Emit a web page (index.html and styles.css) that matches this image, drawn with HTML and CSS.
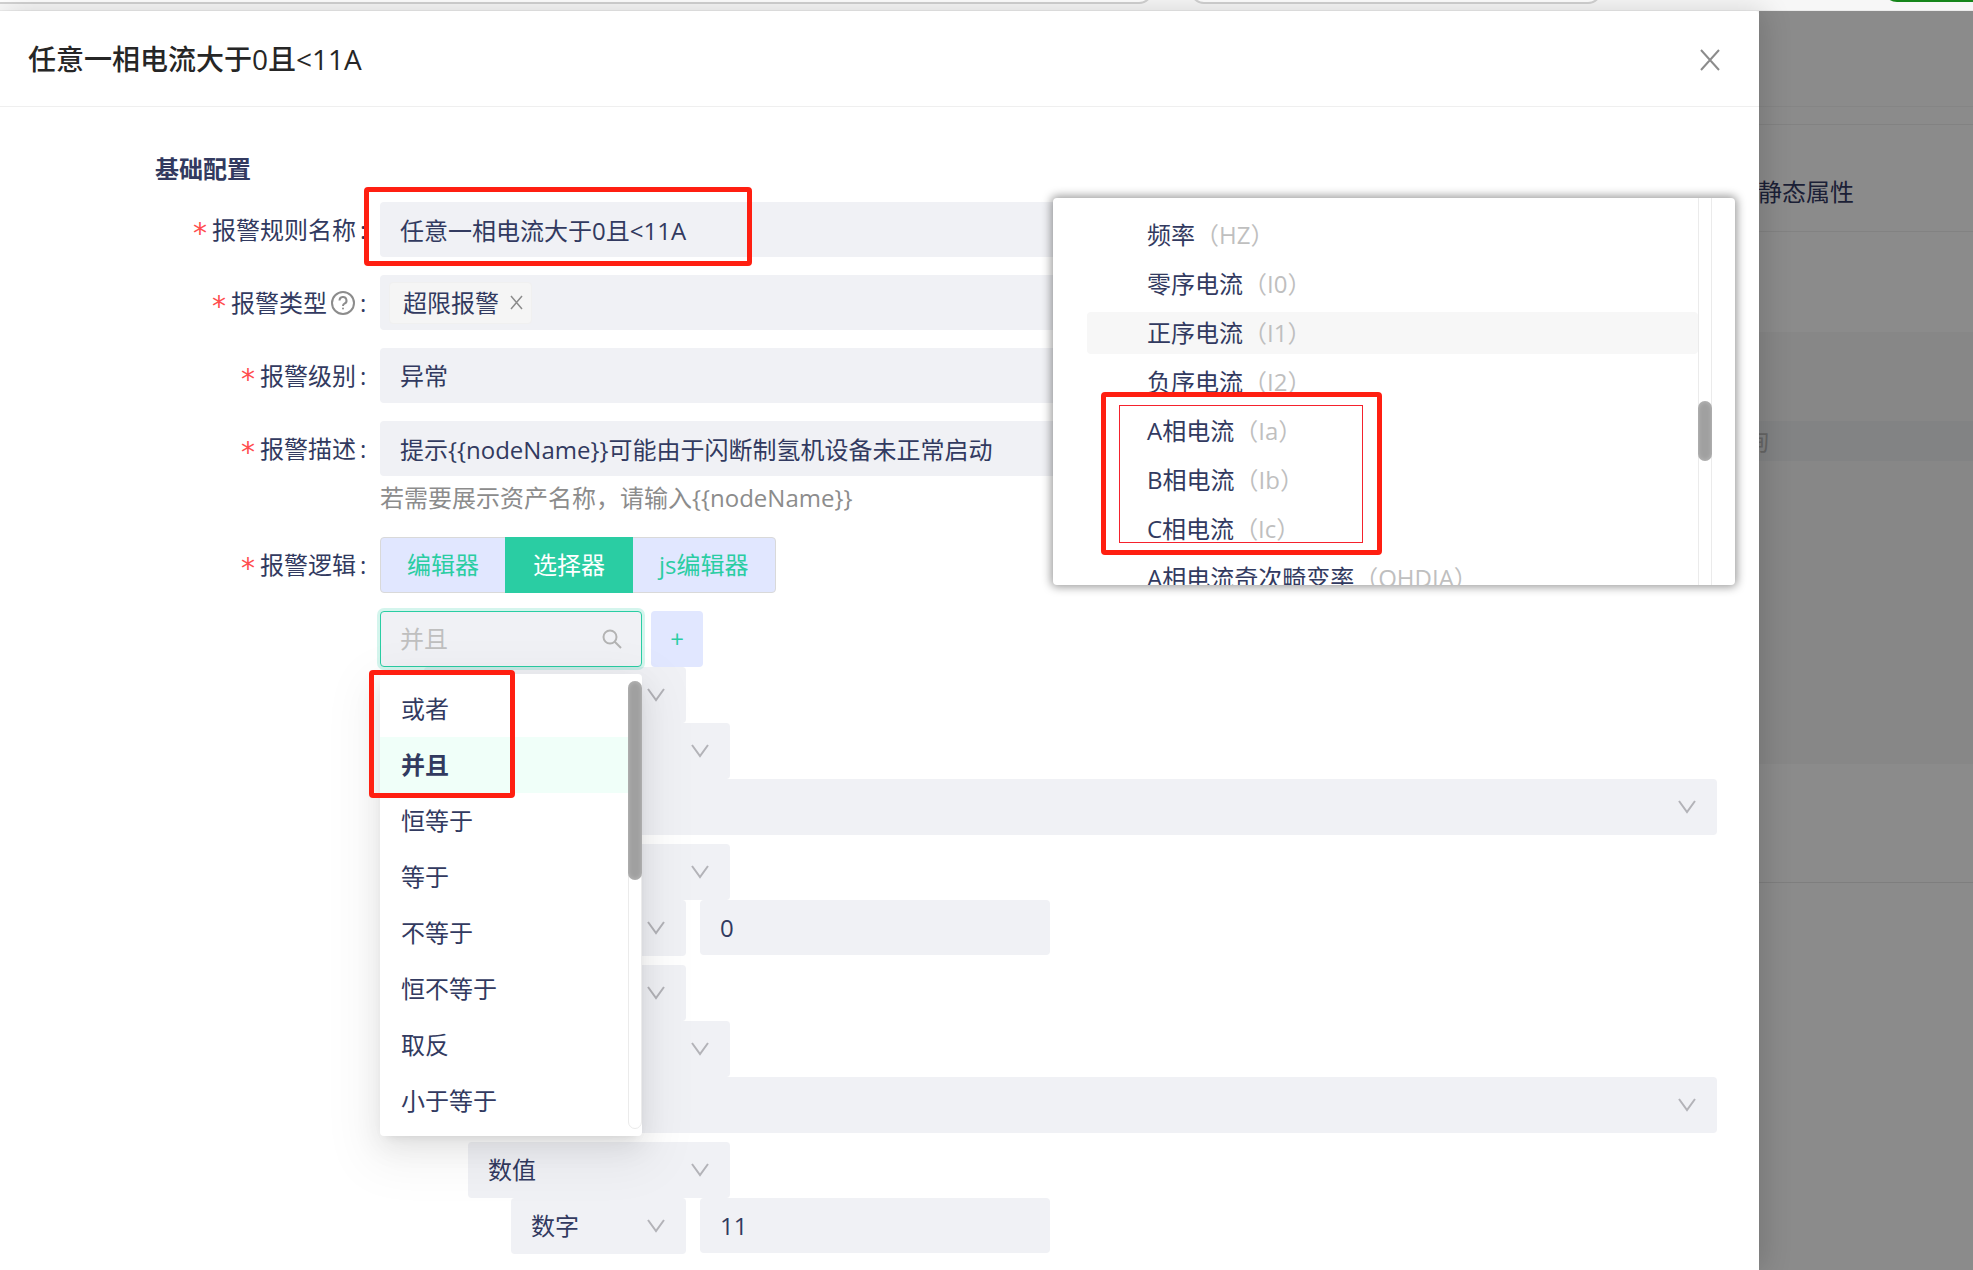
FILE: index.html
```html
<!DOCTYPE html>
<html lang="zh-CN">
<head>
  <meta charset="UTF-8" />
  <meta name="viewport" content="width=device-width, initial-scale=1" />
  <title>任意一相电流大于0且&lt;11A</title>
  <link rel="stylesheet" href="styles.css">
</head>
<body>
  <div class="topbar">
    <div class="address"></div>
    <div class="search-pill"></div>
    <div class="update-pill"></div>
  </div>

  <div class="page">
    <!-- rule drawer -->
    <main class="drawer">
      <header class="drawer-header">
        <h1>任意一相电流大于0且&lt;11A</h1>
        <button type="button" class="close" aria-label="关闭">
          <svg width="20" height="22" viewBox="0 0 20 22"><path d="M1 1L19 21M19 1L1 21" /></svg>
        </button>
      </header>

      <form class="drawer-body">
        <h2>基础配置</h2>

        <div class="row">
          <label class="label" for="name"><span class="star">*</span>报警规则名称<span class="colon">:</span></label>
          <div class="control">
            <input class="field" type="text" id="name" value="任意一相电流大于0且&lt;11A">
            <div class="mark mark-name"></div>
          </div>
        </div>

        <div class="row">
          <div class="label"><span class="star">*</span>报警类型
            <svg class="help-icon" width="26" height="26" viewBox="0 0 26 26"><circle cx="13" cy="13" r="11" /><path d="M9.500 10.500a3.500 3.500 0 1 1 5 3.200c-1 .5-1.500 1-1.500 2.300" /><circle class="dot" cx="13" cy="18.500" r="1" /></svg>
            <span class="colon">:</span></div>
          <div class="control">
            <div class="field tags">
              <span class="tag">超限报警
                <button type="button" class="tag-close" aria-label="移除">
                  <svg width="13" height="15" viewBox="0 0 13 15"><path d="M1 1L12 14M12 1L1 14" /></svg>
                </button>
              </span>
            </div>
          </div>
        </div>

        <div class="row">
          <label class="label" for="level"><span class="star">*</span>报警级别<span class="colon">:</span></label>
          <div class="control">
            <select class="field" id="level"><option>异常</option></select>
          </div>
        </div>

        <div class="row">
          <label class="label" for="desc"><span class="star">*</span>报警描述<span class="colon">:</span></label>
          <div class="control">
            <input class="field" type="text" id="desc" value="提示{{nodeName}}可能由于闪断制氢机设备未正常启动">
            <p class="hint">若需要展示资产名称，请输入{{nodeName}}</p>
          </div>
        </div>

        <div class="row">
          <div class="label"><span class="star">*</span>报警逻辑<span class="colon">:</span></div>
          <div class="control">
            <div class="segments">
              <input type="radio" name="mode" id="mode-editor"><label for="mode-editor">编辑器</label>
              <input type="radio" name="mode" id="mode-picker" checked><label for="mode-picker">选择器</label>
              <input type="radio" name="mode" id="mode-js"><label for="mode-js">js编辑器</label>
            </div>

            <div class="operator">
              <div class="search">
                <input type="text" placeholder="并且" aria-label="运算符">
                <svg width="20" height="20" viewBox="0 0 20 20"><circle cx="8" cy="8" r="6.500" /><path d="M12.500 12.500L19 19" /></svg>
              </div>
              <button type="button" class="add">+</button>

              <div class="menu">
                <ul>
                  <li>或者</li>
                  <li class="selected">并且</li>
                  <li>恒等于</li>
                  <li>等于</li>
                  <li>不等于</li>
                  <li>恒不等于</li>
                  <li>取反</li>
                  <li>小于等于</li>
                </ul>
                <div class="track"><div class="thumb"></div></div>
              </div>
              <div class="mark mark-menu"></div>
            </div>

            <div class="tree">
              <div class="node level-1"><select class="pick" aria-label="比较"><option></option></select></div>
              <div class="node level-2"><select class="pick" aria-label="类型"><option></option></select></div>
              <div class="node level-3"><select class="pick wide" aria-label="属性"><option></option></select></div>
              <div class="node level-2 spaced"><select class="pick" aria-label="类型"><option>数值</option></select></div>
              <div class="node level-3">
                <select class="pick small" aria-label="格式"><option>数字</option></select>
                <input class="value" type="text" value="0" aria-label="值">
              </div>
              <div class="node level-1 spaced"><select class="pick" aria-label="比较"><option></option></select></div>
              <div class="node level-2"><select class="pick" aria-label="类型"><option></option></select></div>
              <div class="node level-3"><select class="pick wide" aria-label="属性"><option></option></select></div>
              <div class="node level-2 spaced"><select class="pick" aria-label="类型"><option>数值</option></select></div>
              <div class="node level-3">
                <select class="pick small" aria-label="格式"><option>数字</option></select>
                <input class="value" type="text" value="11" aria-label="值">
              </div>
            </div>
          </div>
        </div>
      </form>

      <!-- attribute list -->
      <aside class="popup">
        <ul>
          <li>频率<span>（HZ）</span></li>
          <li>零序电流<span>（I0）</span></li>
          <li class="hover">正序电流<span>（I1）</span></li>
          <li>负序电流<span>（I2）</span></li>
          <li>A相电流<span>（Ia）</span></li>
          <li>B相电流<span>（Ib）</span></li>
          <li>C相电流<span>（Ic）</span></li>
          <li>A相电流奇次畸变率<span>（OHDIA）</span></li>
        </ul>
        <div class="popup-track"><div class="popup-thumb"></div></div>
        <div class="mark mark-phase"></div>
        <div class="mark-thin"></div>
      </aside>
    </main>

    <!-- page under the mask -->
    <section class="behind">
      <div class="behind-bar"></div>
      <div class="behind-gap"></div>
      <div class="behind-tab">静态属性</div>
      <div class="behind-tools"></div>
      <div class="behind-card">
        <div class="behind-head">询</div>
      </div>
      <div class="behind-foot"></div>
    </section>
  </div>
</body>
</html>
```
FILE: styles.css
```css
* {
  box-sizing: border-box;
}
body {
  margin: 0;
  min-height: 100vh;
  display: flex;
  flex-direction: column;
  font-family: "Open Sans", "Noto Sans CJK SC", sans-serif;
  font-size: 24px;
  line-height: 36px;
  color: #323a60;
  background: #fff;
}
h1, h2, p, ul {
  margin: 0;
  padding: 0;
}
ul {
  list-style: none;
}
input, select, button {
  font: inherit;
  color: inherit;
  border: none;
  outline: none;
  margin: 0;
}
svg {
  fill: none;
  stroke: #8c8c8c;
  stroke-width: 2;
}

/* browser bar */
.topbar {
  display: flex;
  gap: 37px;
  height: 11px;
  overflow: hidden;
  background: #f7f7f7;
  border-bottom: 1px solid #ebebeb;
}
.address, .search-pill {
  height: 40px;
  margin-top: -36px;
  background: #fff;
  border: 2px solid #d2d2d2;
  border-radius: 14px;
}
.address {
  flex: 1;
  margin-left: -20px;
}
.search-pill {
  width: 412px;
  margin-right: 244px;
}
.update-pill {
  width: 90px;
  height: 40px;
  margin-top: -38px;
  background: #15851a;
  border-radius: 14px 0 0 14px;
}

.page {
  flex: 1;
  display: flex;
}

/* drawer */
.drawer {
  flex: 1;
  position: relative;
  z-index: 1;
  background: #fff;
  border-top-right-radius: 4px;
  box-shadow: 6px 0 28px rgba(0,0,0,0.15);
}
.drawer-header {
  display: flex;
  align-items: center;
  justify-content: space-between;
  height: 96px;
  padding: 0 39px 0 28px;
  border-bottom: 1px solid #efefef;
}
.drawer-header h1 {
  font-size: 28px;
  font-weight: 500;
  color: #262626;
}
.close {
  display: flex;
  padding: 2px 0 0;
  background: none;
}
.drawer-body {
  display: flex;
  flex-direction: column;
  gap: 18px;
  padding: 44px 42px 16px 0;
}
.drawer-body h2 {
  margin: 0 0 -3px 155px;
  font-size: 24px;
  font-weight: 700;
}
.row {
  display: flex;
}
.label {
  flex: 0 0 380px;
  height: 55px;
  display: flex;
  align-items: center;
  justify-content: flex-end;
}
.star {
  margin-right: 5px;
  padding-top: 8px;
  font-family: "DejaVu Sans", sans-serif;
  font-size: 28px;
  color: #ff4d4f;
}
.colon {
  width: 6px;
  margin: 0 14px 0 4px;
}
.help-icon {
  margin-left: 3px;
}
.help-icon .dot {
  fill: #8c8c8c;
  stroke: none;
}
.control {
  flex: 1;
  position: relative;
}
.field {
  display: block;
  width: 100%;
  height: 55px;
  padding: 0 20px;
  background: #f0f1f5;
  border-radius: 4px;
  appearance: none;
}
.tags {
  display: flex;
  align-items: center;
  padding: 0 9px;
}
.tag {
  display: flex;
  align-items: center;
  height: 42px;
  padding: 0 8px 0 13px;
  background: #f5f5f5;
  border: 1px solid #f0f0f0;
  border-radius: 4px;
}
.tag-close {
  display: flex;
  margin-left: 11px;
  padding: 0;
  background: none;
}
.tag-close svg {
  stroke-width: 1.5;
}
.hint {
  line-height: 43px;
  color: #8c8c8c;
}

/* mode switch */
.segments {
  display: inline-flex;
  vertical-align: top;
  height: 56px;
  background: #e1e7ff;
  border: 1px solid #d9d9d9;
  border-radius: 4px;
}
.segments input {
  appearance: none;
  width: 0;
}
.segments label {
  padding: 0 26px;
  line-height: 54px;
  color: #2acda3;
}
.segments input:checked + label {
  margin: -1px 0;
  padding: 0 28px;
  line-height: 56px;
  color: #fff;
  background: #2acda3;
}

/* operator search and its menu */
.operator {
  position: relative;
  display: flex;
  gap: 9px;
  margin-top: 18px;
}
.search {
  display: flex;
  align-items: center;
  width: 262px;
  height: 56px;
  padding: 0 19px;
  background: #f0f1f5;
  border: 1px solid #2acda3;
  border-radius: 4px;
  box-shadow: 0 0 0 3px rgba(42,205,163,0.2);
}
.search input {
  flex: 1;
  min-width: 0;
  padding: 0;
  background: none;
}
.search input::placeholder {
  color: #bfbfbf;
}
.search svg {
  stroke: #b3b3b3;
}
.add {
  width: 52px;
  padding: 0;
  color: #2acda3;
  background: #e1e7ff;
  border-radius: 4px;
}
.menu {
  position: absolute;
  z-index: 2;
  top: 63px;
  left: 0;
  display: flex;
  width: 262px;
  padding: 7px 0;
  background: #fff;
  border-radius: 4px;
  box-shadow: 0 5px 10px -6px rgba(0,0,0,0.12), 0 10px 28px rgba(0,0,0,0.08), 0 16px 50px 14px rgba(0,0,0,0.05);
}
.menu ul {
  flex: 1;
}
.menu li {
  padding: 0 21px;
  line-height: 56px;
}
.menu .selected {
  font-weight: 700;
  background: #f0fff9;
}
.track {
  width: 14px;
  border: 1px solid #ebebeb;
  border-radius: 7px;
}
.thumb {
  height: 199px;
  margin: -1px;
  background: #a0a0a0;
  border-radius: 7px;
  box-shadow: inset 0 0 5px rgba(255,255,255,0.3);
}

/* condition tree */
.node {
  display: flex;
  gap: 14px;
}
.spaced {
  margin-top: 9px;
}
.level-1 {
  padding-left: 44px;
}
.level-2 {
  padding-left: 88px;
}
.level-3 {
  padding-left: 131px;
}
.pick {
  width: 262px;
  height: 56px;
  padding: 0 20px;
  border-radius: 4px;
  appearance: none;
  background: #f0f1f5 url("data:image/svg+xml,%3Csvg xmlns='http://www.w3.org/2000/svg' width='18' height='14' viewBox='0 0 18 14'%3E%3Cpath d='M1 1L9 12L17 1' fill='none' stroke='%23b3b3b8' stroke-width='2'/%3E%3C/svg%3E") no-repeat right 21px center;
}
.pick.small {
  width: 175px;
}
.pick.wide {
  width: 100%;
}
.value {
  width: 350px;
  height: 55px;
  padding: 0 20px;
  background: #f0f1f5;
  border-radius: 4px;
}

/* attribute popup */
.popup {
  position: absolute;
  top: 187px;
  right: 24px;
  width: 682px;
  height: 387px;
  padding: 16px 0 0 34px;
  display: flex;
  background: #fff;
  border-radius: 4px;
  box-shadow: 0 0 10px 2px rgba(0,0,0,0.4);
}
.popup ul {
  flex: 1;
  height: 371px;
  display: flex;
  flex-direction: column;
  gap: 7px;
  overflow: hidden;
}
.popup li {
  flex: none;
  padding-left: 60px;
  line-height: 42px;
  border-radius: 4px;
}
.popup li span {
  color: #bfbfbf;
}
.popup .hover {
  background: #f7f7f7;
}
.popup-track {
  width: 14px;
  margin: -16px 23px 0 0;
  padding-top: 203px;
  border: solid #ebebeb;
  border-width: 0 1px;
}
.popup-thumb {
  height: 60px;
  margin: 0 -1px;
  background: #a0a0a0;
  border-radius: 7px;
  box-shadow: inset 0 0 5px rgba(255,255,255,0.3);
}

/* red marks */
.mark {
  position: absolute;
  z-index: 3;
  border: 5px solid #ff1f11;
  border-radius: 4px;
  pointer-events: none;
}
.mark-name {
  top: -15px;
  left: -16px;
  width: 388px;
  height: 79px;
}
.mark-menu {
  top: 59px;
  left: -11px;
  width: 146px;
  height: 128px;
}
.mark-phase {
  top: 194px;
  left: 48px;
  width: 281px;
  height: 163px;
}
.mark-thin {
  position: absolute;
  top: 207px;
  left: 66px;
  width: 244px;
  height: 138px;
  border: 1px solid #f5222d;
}

/* masked page */
.behind {
  flex: 0 0 214px;
  display: flex;
  flex-direction: column;
  overflow: hidden;
  color: #1b2036;
  background: #8b8b8b;
}
.behind-bar {
  height: 96px;
  border-bottom: 1px solid #858585;
}
.behind-gap {
  height: 18px;
  border-bottom: 1px solid #828282;
}
.behind-tab {
  display: flex;
  justify-content: flex-end;
  height: 107px;
  padding: 49px 119px 0 0;
  white-space: nowrap;
  border-bottom: 1px solid #828282;
}
.behind-tools {
  height: 100px;
}
.behind-card {
  height: 432px;
  padding-top: 89px;
  background: #878787;
}
.behind-head {
  display: flex;
  justify-content: flex-end;
  height: 40px;
  padding-right: 204px;
  line-height: 40px;
  color: #666;
  background: #828384;
}
.behind-foot {
  height: 119px;
  border-bottom: 1px solid #7e7e7e;
}
```
